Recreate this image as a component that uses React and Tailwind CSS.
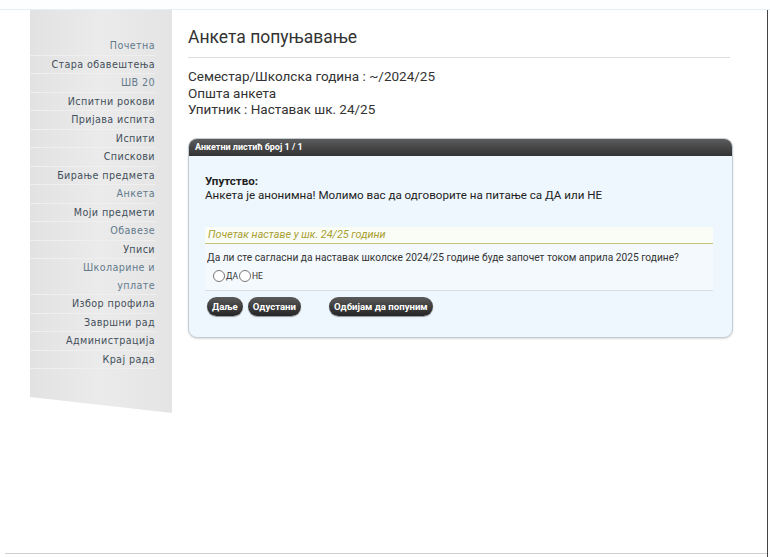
import React from "react";

const menu = [
  ["Почетна", "text-[#647a8c]"],
  ["Стара обавештења", ""],
  ["ШВ 20", "text-[#647a8c]"],
  ["Испитни рокови", ""],
  ["Пријава испита", ""],
  ["Испити", ""],
  ["Спискови", ""],
  ["Бирање предмета", ""],
  ["Анкета", "text-[#647a8c]"],
  ["Моји предмети", ""],
  ["Обавезе", "text-[#647a8c]"],
  ["Уписи", ""],
  ["Школарине и уплате", "text-[#647a8c]"],
  ["Избор профила", ""],
  ["Завршни рад", ""],
  ["Администрација", ""],
  ["Крај рада", ""],
];

function Btn({ children, className = "" }) {
  return (
    <button
      className={`h-[19px] px-[5px] rounded-full bg-gradient-to-b from-[#5a5a5a] to-[#262626] text-white text-[9.6px] font-bold leading-none shadow-[0_1px_1px_rgba(0,0,0,0.4)] ${className}`}
    >
      {children}
    </button>
  );
}

function Radio({ label }) {
  return (
    <label className="flex items-center">
      <span className="w-[12px] h-[12px] rounded-full border border-[#777] bg-white inline-block" />
      <span className="text-[8.5px] ml-[1px] text-[#333]">{label}</span>
    </label>
  );
}

export default function App() {
  return (
    <div
      className="w-[770px] h-[557px] bg-white relative overflow-hidden"
      style={{ fontFamily: "Roboto, 'Liberation Sans', sans-serif" }}
    >
      <div className="h-[10px] border-b border-[#e6eef4] bg-[#fdfeff]" />
      <div className="flex">
        <nav className="ml-[30px] w-[142px] h-[403px] bg-gradient-to-r from-[#e2e2e2] via-[#ebebeb] to-[#e4e4e4] pt-[27px] pr-[17px] [clip-path:polygon(0_0,100%_0,100%_100%,0_96%)]">
          {menu.map(([t, c]) => (
            <div
              key={t}
              className={`text-right tracking-[0.4px] leading-[17.5px] border-b border-[#efefef] ${c || "text-[#434f5a]"}`}
              style={{ fontFamily: "'DejaVu Sans', sans-serif", fontSize: "9.6px" }}
            >
              {t === "Школарине и уплате" ? (
                <>
                  Школарине и
                  <br />
                  уплате
                </>
              ) : (
                t
              )}
            </div>
          ))}
        </nav>
        <main className="ml-[16px] w-[545px]">
          <h1 className="text-[17.5px] text-[#333] mt-[16px] leading-[22px]">Анкета попуњавање</h1>
          <div className="mt-[9px] border-t border-[#dcdcdc] w-[542px]" />
          <div className="mt-[10px] text-[13.5px] text-[#333] leading-[16.5px]">
            <div>Семестар/Школска година : ~/2024/25</div>
            <div>Општа анкета</div>
            <div>Упитник : Наставак шк. 24/25</div>
          </div>
          <section className="mt-[20px] w-[545px] rounded-[9px] border border-[#c4ccd4] bg-[#eef7fd] overflow-hidden shadow-[0_1px_2px_rgba(0,0,0,0.15)]">
            <div className="h-[17px] bg-gradient-to-b from-[#5c5c5c] to-[#333] text-white text-[9px] font-bold leading-[17px] pl-[6px]">
              Анкетни листић број 1 / 1
            </div>
            <div className="px-[16px] pt-[18px] pb-[21px]">
              <div className="text-[11.6px] text-[#222] leading-[14px]">
                <div className="font-bold">Упутство:</div>
                <div>Анкета је анонимна! Молимо вас да одговорите на питање са ДА или НЕ</div>
              </div>
              <div className="mt-[25px] w-[508px] bg-[#f4f9fd] border-b border-[#d6dde4]">
                <div className="italic text-[10.8px] text-[#a8a030] leading-[14px] pl-[3px] pt-[1px] pb-[1px] border-b border-[#c9c47a] bg-[#fafcf6]">
                  Почетак наставе у шк. 24/25 години
                </div>
                <div className="text-[10.2px] text-[#333] pl-[2px] pt-[8px] leading-[12px]">
                  Да ли сте сагласни да наставак школске 2024/25 године буде започет током априла 2025 године?
                </div>
                <div className="flex items-center gap-[1px] pl-[8px] pt-[6px] pb-[8px]">
                  <Radio label="ДА" />
                  <Radio label="НЕ" />
                </div>
              </div>
              <div className="flex items-center mt-[6px] pl-[2px]">
                <Btn>Даље</Btn>
                <Btn className="ml-[5px]">Одустани</Btn>
                <Btn className="ml-[28px]">Одбијам да попуним</Btn>
              </div>
            </div>
          </section>
        </main>
      </div>
      <div className="absolute right-[2px] top-[10px] bottom-0 w-[1px] bg-[#444]" />
      <div className="absolute left-[5px] right-[3px] bottom-[3px] h-[1px] bg-[#d0d0d0]" />
    </div>
  );
}
